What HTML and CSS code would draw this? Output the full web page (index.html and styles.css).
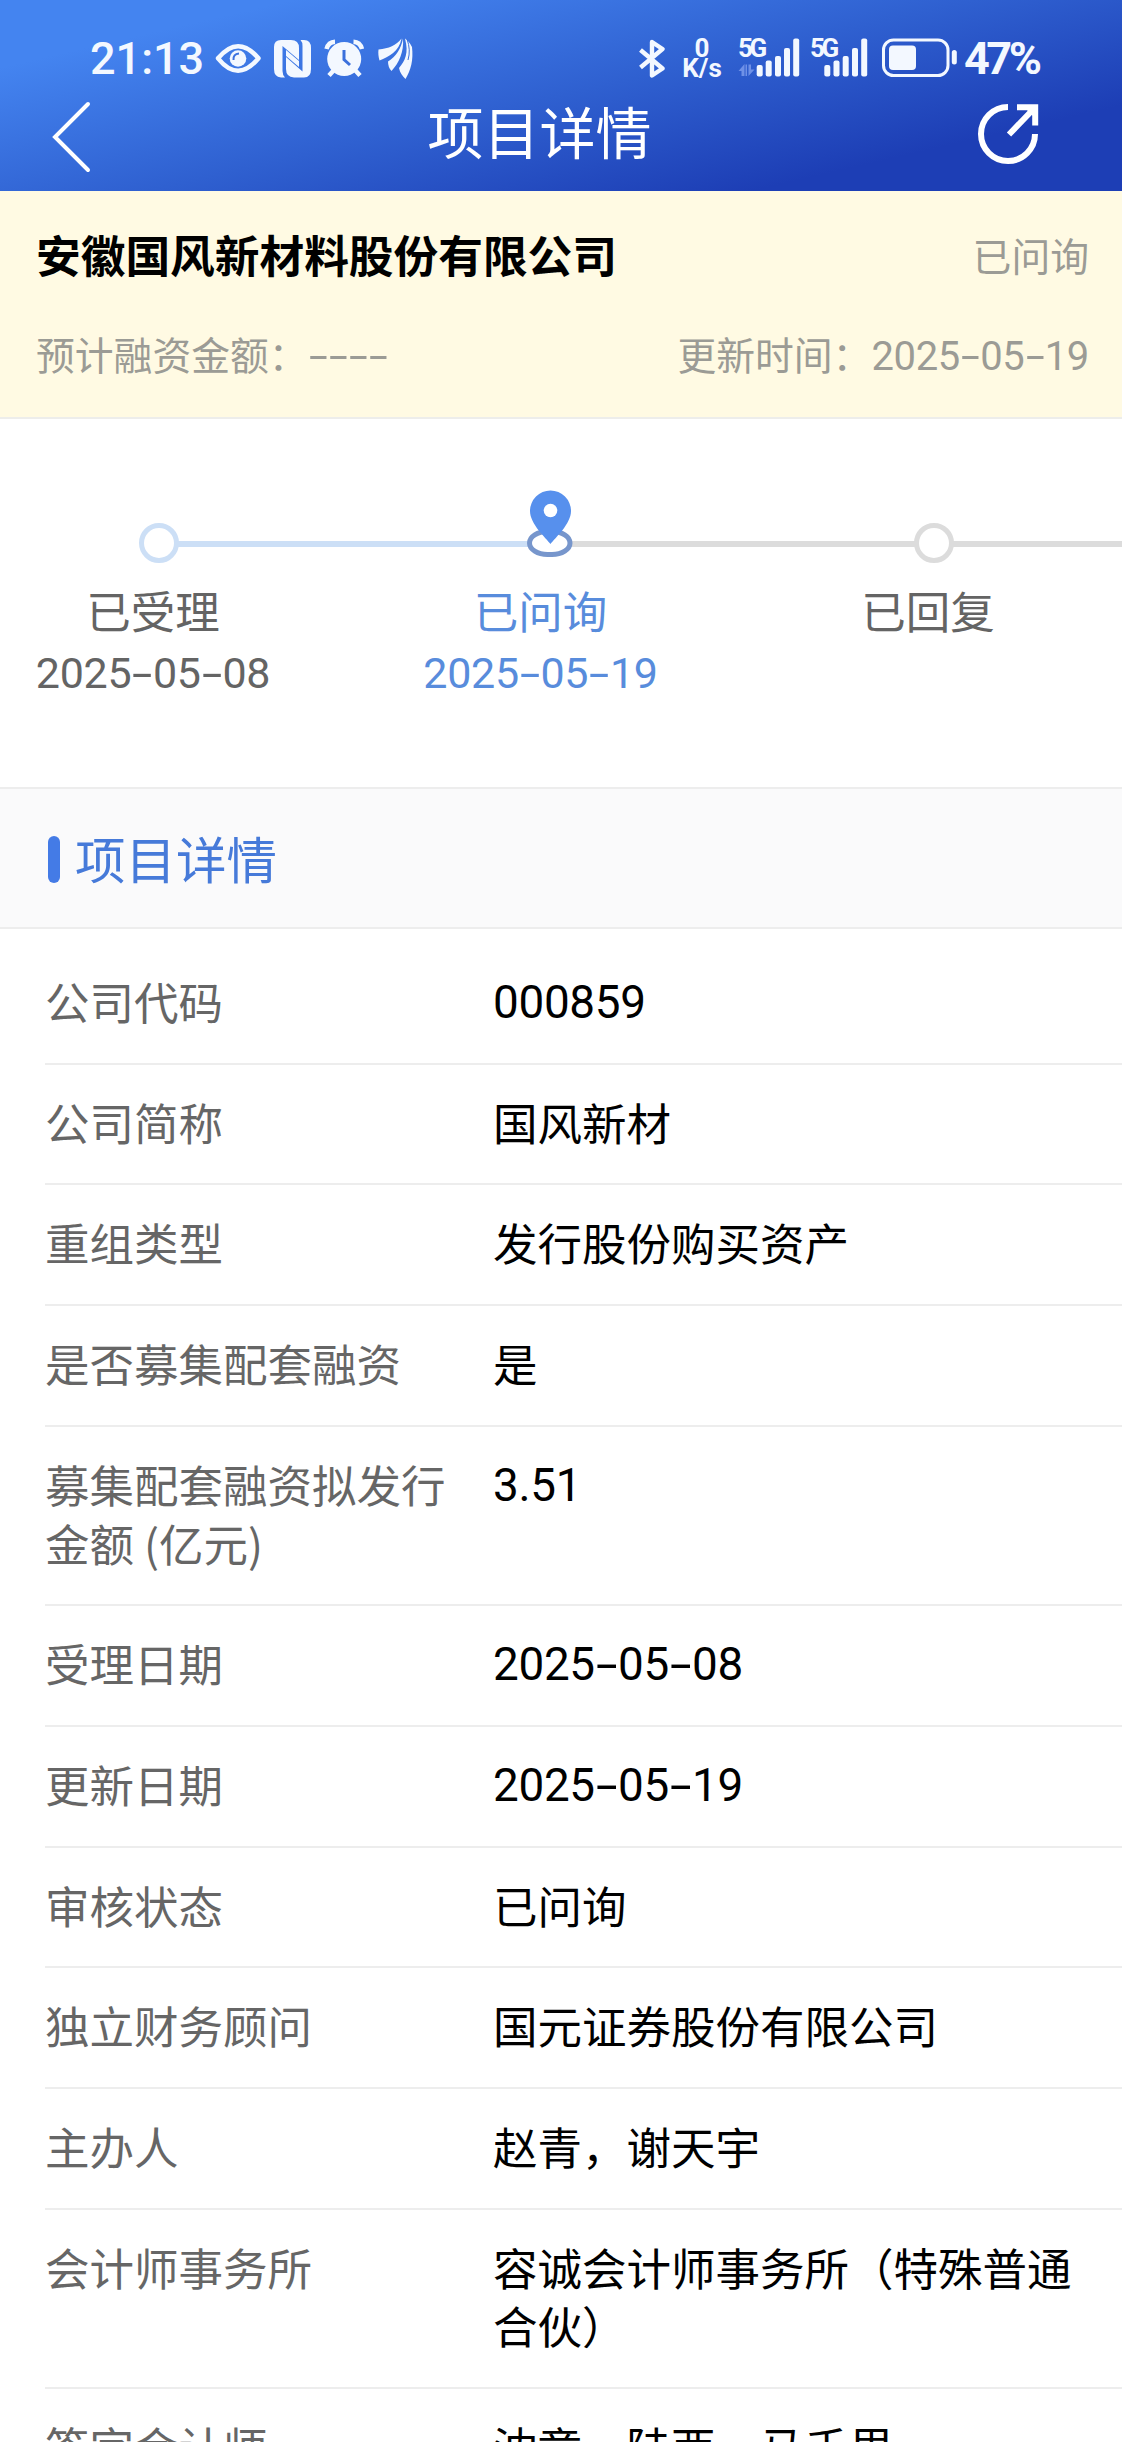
FILE: index.html
```
<!DOCTYPE html>
<html lang="zh-CN">
<head>
<meta charset="utf-8">
<title>项目详情</title>
<link rel="stylesheet" href="styles.css">
</head>
<body>
<div class="screen">
  <header class="header">
    <div class="status">
      <span class="clock">21:13</span>
      <svg class="status-icons" width="200" height="44" viewBox="214 37 200 44">
        <path d="M218 58.300Q238 34 258.500 58.300Q238 83 218 58.300Z" fill="none" stroke="#f3f8ff" stroke-width="4.500" stroke-linejoin="round"/>
        <circle cx="238" cy="58.500" r="8.300" fill="#f3f8ff"/>
        <path d="M233.500 60Q233 54 239 53.500" fill="none" stroke="#3c72df" stroke-width="2"/>
        <path d="M285 77.500H281Q274 77 274 69V47Q274 40 281 40H291Q299 40 299 48V60L282.500 46V71Q282.500 75 285 77.500Z" fill="#f3f8ff"/>
        <path d="M300.500 40H304Q311 40 311 48V69Q311 77.500 304 77.500H294Q286 77 286 69V57L302.500 71.500V46Q302.500 42 300.500 40Z" fill="#f3f8ff"/>
        <path d="M286 56L299 67V61L286 50Z" fill="#f3f8ff"/>
        <circle cx="344.200" cy="59" r="17" fill="#f3f8ff"/>
        <path d="M326.500 49Q328.500 42 335 41.800M353.500 41.800Q360 42 362 49M334 70L329 75.500M355 70L360 75.500" fill="none" stroke="#f3f8ff" stroke-width="4.500"/>
        <path d="M344 50V59.500L350 65" fill="none" stroke="#3b70dc" stroke-width="3"/>
        <path d="M378.500 49.500C389 48.500 396 45.500 401.500 38.500C399 52 389 56.500 379.500 60.500C378.500 57 378 53 378.500 49.500Z" fill="#f3f8ff"/>
        <path d="M403 38.500C404 52 399 63 391.500 71Q388 67.500 388 61.500C396 56.500 401 49 403 38.500Z" fill="#f3f8ff"/>
        <path d="M405 38.500C409 53 405 61 399 68C400 73 402.500 76 405.500 79C411 70 413.500 60 412 47Q409 41 405 38.500Z" fill="#f3f8ff"/>
        <path d="M407 39Q411 50 408 60" fill="none" stroke="#3b70dc" stroke-width="1"/>
      </svg>
      <div class="status-right">
        <svg width="26" height="40" viewBox="640 38 26 40"><path d="M641.500 50L663.500 68.500L653 75.500V42L663.500 49L641.500 67.500" fill="none" stroke="#f3f8ff" stroke-width="4.400" stroke-linejoin="round"/></svg>
        <div class="speed"><span>0</span><span>K/s</span></div>
        <div class="signal">
          <span class="net">5G</span>
          <svg width="62" height="40" viewBox="738 38 62 40">
            <path d="M738.500 71L744.500 64V76H741.500V71ZM745.500 64.500H747V76H745.500ZM748.500 64.500V76L754.500 69.500H751V64.500Z" fill="#7f9fee" opacity=".8"/>
            <g fill="#f3f8ff"><rect x="756.700" y="65" width="6" height="11.500" rx="2"/><rect x="765.700" y="60.500" width="6" height="16" rx="2"/><rect x="775" y="56" width="6" height="20.500" rx="2"/><rect x="784" y="48" width="6" height="28.500" rx="2"/><rect x="793.200" y="38.500" width="6" height="38" rx="2"/></g>
          </svg>
        </div>
        <div class="signal second">
          <span class="net">5G</span>
          <svg width="58" height="40" viewBox="810 38 58 40">
            <g fill="#f3f8ff"><rect x="824.300" y="65" width="6" height="11.500" rx="2"/><rect x="833.500" y="60.500" width="6" height="16" rx="2"/><rect x="842.700" y="56" width="6" height="20.500" rx="2"/><rect x="852" y="48" width="6" height="28.500" rx="2"/><rect x="861.200" y="38.500" width="6" height="38" rx="2"/></g>
          </svg>
        </div>
        <svg class="battery" width="77" height="40" viewBox="881 38 77 40">
          <rect x="883.500" y="40" width="64.500" height="35.500" rx="10" fill="none" stroke="#f3f8ff" stroke-width="3"/>
          <rect x="889" y="45.500" width="27" height="24.500" rx="4" fill="#f3f8ff"/>
          <rect x="951.800" y="50" width="5" height="14.500" rx="2.500" fill="#f3f8ff"/>
        </svg>
        <span class="percent">47%</span>
      </div>
    </div>
    <div class="navbar">
      <svg class="back" width="40" height="76" viewBox="52 99 40 76"><path d="M88 104L55 137L88 170" fill="none" stroke="#fff" stroke-width="4" stroke-linecap="round"/></svg>
      <h1>项目详情</h1>
      <svg width="62" height="64" viewBox="977 102 62 64"><path d="M1008 107A27 27 0 1 0 1035 134M1009 134.500L1034 108.500M1017 107.300H1035.200V125.500" fill="none" stroke="#fff" stroke-width="6"/><path d="M1024 107H1036V119Z" fill="#fff"/></svg>
    </div>
  </header>

  <section class="summary">
    <div class="summary-row">
      <h2>安徽国风新材料股份有限公司</h2>
      <span class="state">已问询</span>
    </div>
    <div class="summary-row meta">
      <span>预计融资金额：<span class="num"><i>-</i><i>-</i><i>-</i><i>-</i></span></span>
      <span>更新时间：<span class="num">2025<i>-</i>05<i>-</i>19</span></span>
    </div>
  </section>

  <section class="steps">
    <div class="step done">
      <div class="track"><span class="dot"></span></div>
      <p>已受理</p>
      <p class="num">2025<i>-</i>05<i>-</i>08</p>
    </div>
    <div class="step current">
      <div class="track">
        <svg class="pin" width="46" height="68" viewBox="527 490 46 68">
          <rect x="529.500" y="531.500" width="40.500" height="23" rx="18" ry="11.500" fill="#fff" stroke="#7796cc" stroke-width="5"/>
          <path d="M550.500 544C546 538 530 524 530 511A20.500 20.500 0 0 1 571 511C571 524 555 538 550.500 544Z" fill="#5790ed"/>
          <circle cx="550.500" cy="510.500" r="6.800" fill="#fff"/>
        </svg>
      </div>
      <p>已问询</p>
      <p class="num">2025<i>-</i>05<i>-</i>19</p>
    </div>
    <div class="step">
      <div class="track"><span class="dot"></span></div>
      <p>已回复</p>
    </div>
  </section>

  <h3 class="section-title">项目详情</h3>

  <dl class="details">
    <div class="row"><dt>公司代码</dt><dd><span class="num">000859</span></dd></div>
    <div class="row"><dt>公司简称</dt><dd>国风新材</dd></div>
    <div class="row"><dt>重组类型</dt><dd>发行股份购买资产</dd></div>
    <div class="row"><dt>是否募集配套融资</dt><dd>是</dd></div>
    <div class="row"><dt>募集配套融资拟发行金额 (亿元)</dt><dd><span class="num">3.51</span></dd></div>
    <div class="row"><dt>受理日期</dt><dd><span class="num">2025<i>-</i>05<i>-</i>08</span></dd></div>
    <div class="row"><dt>更新日期</dt><dd><span class="num">2025<i>-</i>05<i>-</i>19</span></dd></div>
    <div class="row"><dt>审核状态</dt><dd>已问询</dd></div>
    <div class="row"><dt>独立财务顾问</dt><dd>国元证券股份有限公司</dd></div>
    <div class="row"><dt>主办人</dt><dd>赵青，谢天宇</dd></div>
    <div class="row"><dt>会计师事务所</dt><dd>容诚会计师事务所（特殊普通合伙）</dd></div>
    <div class="row"><dt>签字会计师</dt><dd>沈童，陆西，马千里</dd></div>
  </dl>
</div>
</body>
</html>
```
FILE: styles.css
```
* { box-sizing: border-box; margin: 0; padding: 0; }
body {
  background: #fff;
  font-family: "Noto Sans CJK SC", sans-serif;
  color: #000;
}
.screen { width: 1122px; height: 2442px; overflow: hidden; }
svg { display: block; flex: none; }

.header {
  height: 191px;
  padding-top: 37px;
  background: linear-gradient(167deg, #4484f0 15%, #2f60d0 50%, #1d3eb5 81%);
  color: #fff;
}
.status {
  display: flex;
  height: 44px;
  padding: 0 83px 0 90px;
  color: #f3f8ff;
  font-family: Roboto, sans-serif;
}
.clock { width: 124px; font-size: 45px; font-weight: 500; line-height: 43px; }
.status-right { display: flex; margin-left: auto; padding-top: 1px; }
.speed, .net { font-size: 26px; font-weight: 700; line-height: 20px; }
.speed {
  display: flex;
  flex-direction: column;
  align-items: center;
  width: 40px;
  margin: 0 16px 0 17px;
}
.signal { display: grid; }
.signal > * { grid-area: 1 / 1; }
.net { letter-spacing: -3.500px; }
.second { margin-left: 10px; }
.battery { margin-left: 13px; }
.percent { width: 81px; padding-left: 6px; font-size: 45px; font-weight: 700; line-height: 42px; letter-spacing: -3.500px; white-space: nowrap; }
.navbar {
  display: flex;
  align-items: center;
  justify-content: space-between;
  height: 100px;
  padding: 6px 83px 0 52px;
}
.back { margin-top: 5px; }
.navbar h1 { margin: -9px 0 0 10px; font-size: 56px; font-weight: 400; line-height: 80px; }

.summary {
  height: 228px;
  padding: 30px 33px 0 36px;
  background: #fffae3;
  border-bottom: 2px solid #ededeb;
}
.summary-row { display: flex; justify-content: space-between; align-items: center; height: 66px; }
.summary h2 { font-size: 44.700px; font-weight: 700; line-height: 66px; }
.state, .meta { font-size: 38.800px; color: #9b9b95; }
.meta { margin-top: 33px; }

.num { font-family: Roboto, "Noto Sans CJK SC", sans-serif; font-size: 1.030em; letter-spacing: -.3px; }
.num i {
  display: inline-block;
  width: .505em;
  font-style: normal;
  text-align: center;
  transform: scaleX(1.700);
}

.steps {
  display: flex;
  height: 368px;
  padding-top: 71px;
  overflow: hidden;
}
.step {
  flex: 0 0 387.500px;
  font-size: 44.500px;
  line-height: 60px;
  text-align: center;
  color: #646464;
}
.step p { width: 306px; }
.step .num { padding-top: 3px; font-size: 43px; }
.track {
  display: flex;
  align-items: flex-end;
  height: 68px;
  margin-bottom: 22px;
  padding-left: 139px;
  background: linear-gradient(#dcdcdc, #dcdcdc) 0 51px / 100% 6px no-repeat;
}
.dot {
  width: 40px;
  height: 40px;
  margin-bottom: -5px;
  border: 5px solid #dcdcdc;
  border-radius: 50%;
  background: #fff;
}
.done .track { background: linear-gradient(#ccdff6, #ccdff6) 159px 51px / 100% 6px no-repeat; }
.done .dot { border-color: #ccdff6; }
.current { color: #588cdc; }
.current .track { background-image: linear-gradient(90deg, #ccdff6 160px, #dcdcdc 160px); }

.section-title {
  display: flex;
  align-items: center;
  height: 142px;
  padding: 0 0 2px 48px;
  background: #fafafb;
  border: solid #ededed;
  border-width: 2px 0;
  color: #467ad9;
  font-size: 50.500px;
  font-weight: 400;
}
.section-title::before {
  content: "";
  width: 12px;
  height: 47px;
  margin: 5px 15px 0 0;
  border-radius: 6px;
  background: #447be6;
}

.details { padding: 15px 0 0 45px; font-size: 44.500px; line-height: 58.700px; }
.row {
  display: grid;
  grid-template-columns: 448px 590px;
  padding: 28px 0 32px;
  border-bottom: 2px solid #ededed;
}
dt { width: 410px; color: #666; }
dd { color: #000; }
.details .num { display: block; padding-top: 3px; line-height: 55.700px; }
```
